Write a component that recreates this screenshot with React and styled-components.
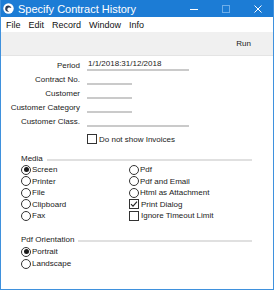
import React from "react";
import styled, { createGlobalStyle } from "styled-components";

const Global = createGlobalStyle`
	html, body {
		margin: 0;
		padding: 0;
		background: #ffffff;
	}
	body {
		font-family: "Liberation Sans", Arial, sans-serif;
		font-size: 8px;
		color: #1a1a1a;
	}
`;

const Window = styled.div`
	width: 274px;
	height: 290px;
	box-sizing: border-box;
	display: flex;
	flex-direction: column;
	border: 1px solid #3f91dd;
	border-top: none;
	background: #ffffff;
	overflow: hidden;
`;

const TitleBar = styled.div`
	height: 17px;
	margin: 0 -1px;
	display: flex;
	align-items: center;
	background: #1c7cd5;
	color: #ffffff;
	font-size: 11px;
	padding-left: 3px;
`;

const TitleText = styled.div`
	flex: 1;
	margin-left: 4px;
	white-space: nowrap;
`;

const WinButton = styled.div`
	width: 32px;
	height: 17px;
	display: flex;
	align-items: center;
	justify-content: center;
`;

const MenuBar = styled.div`
	height: 15px;
	display: flex;
	align-items: center;
	gap: 8px;
	padding-left: 5px;
	font-size: 9px;
	color: #111;
`;

const Toolbar = styled.div`
	height: 23px;
	display: flex;
	align-items: center;
	justify-content: flex-end;
	padding-right: 22px;
	background: #f0f0f0;
	border-bottom: 1px solid #e4e4e4;
	font-size: 8px;
`;

const Content = styled.div`
	padding-top: 2px;
`;

const Form = styled.div`
	display: grid;
	grid-template-columns: 79px auto;
	grid-auto-rows: 14px;
	column-gap: 7px;
	align-items: center;
`;

const Label = styled.div`
	text-align: right;
	white-space: nowrap;
`;

const Field = styled.div`
	width: ${({ w }) => w}px;
	height: 10px;
	line-height: 9px;
	border-bottom: 2px solid #cacaca;
	padding-left: 1px;
	white-space: nowrap;
`;

const CheckRow = styled.div`
	height: 14px;
	margin-top: 4px;
	padding-left: 86px;
	display: flex;
	align-items: center;
`;

const Box = styled.div`
	width: 10px;
	height: 10px;
	box-sizing: border-box;
	border: 1px solid #333;
	background: #fff;
	margin-right: 2px;
	display: flex;
	align-items: center;
	justify-content: center;
	flex-shrink: 0;
`;

const Group = styled.div`
	margin-top: ${({ top }) => top}px;
	padding: 0 21px 0 20px;
`;

const GroupHead = styled.div`
	height: 12px;
	display: flex;
	align-items: center;
`;

const GroupLine = styled.div`
	flex: 1;
	height: 2px;
	background: #e0e0e0;
	margin-left: 4px;
	margin-top: 3px;
`;

const Options = styled.div`
	display: grid;
	grid-template-columns: 108px auto;
	grid-auto-flow: column;
	grid-template-rows: repeat(${({ rows }) => rows}, ${({ step }) => step}px);
	align-items: center;
`;

const Option = styled.div`
	display: flex;
	align-items: center;
	white-space: nowrap;
`;

const Circle = styled.div`
	width: 10px;
	height: 10px;
	box-sizing: border-box;
	border: 1px solid #333;
	border-radius: 50%;
	background: #fff;
	margin-right: 1px;
	display: flex;
	align-items: center;
	justify-content: center;
	flex-shrink: 0;
	&::after {
		content: "";
		display: ${({ on }) => (on ? "block" : "none")};
		width: 5px;
		height: 5px;
		border-radius: 50%;
		background: #1a1a1a;
	}
`;

const Check = () => (
	<svg width="8" height="8" viewBox="0 0 8 8">
		<path d="M1 4.2 L3 6.2 L7 1.6" fill="none" stroke="#222" strokeWidth="1.1" />
	</svg>
);

const Radio = ({ on, children }) => (
	<Option>
		<Circle on={on ? 1 : 0} />
		{children}
	</Option>
);

const CheckOption = ({ on, children }) => (
	<Option>
		<Box>{on && <Check />}</Box>
		{children}
	</Option>
);

const AppIcon = () => (
	<svg width="11" height="11" viewBox="0 0 11 11">
		<circle cx="5.5" cy="5.5" r="5.2" fill="#ffffff" />
		<path d="M3 3.2 C5 1.8 8 2.6 8.4 5 C7 4 5 4.2 4.4 5.8 C4 7 5 8.4 6.4 8.6 C4 9.4 1.8 7.6 2.2 5.2 C2.4 4.3 2.7 3.6 3 3.2 Z" fill="#2a3a55" />
	</svg>
);

const App = () => {
	return (
		<>
			<Global />
			<Window>
				<TitleBar>
					<AppIcon />
					<TitleText>Specify Contract History</TitleText>
					<WinButton>
						<svg width="10" height="10" viewBox="0 0 10 10">
							<path d="M1 5.5 H9" stroke="#fff" strokeWidth="1" />
						</svg>
					</WinButton>
					<WinButton>
						<svg width="10" height="10" viewBox="0 0 10 10">
							<rect x="1.5" y="1.5" width="7" height="7" fill="none" stroke="#6eaee9" strokeWidth="1" />
						</svg>
					</WinButton>
					<WinButton>
						<svg width="10" height="10" viewBox="0 0 10 10">
							<path d="M1.5 1.5 L8.5 8.5 M8.5 1.5 L1.5 8.5" stroke="#fff" strokeWidth="1" />
						</svg>
					</WinButton>
				</TitleBar>
				<MenuBar>
					<span>File</span>
					<span>Edit</span>
					<span>Record</span>
					<span>Window</span>
					<span>Info</span>
				</MenuBar>
				<Toolbar>Run</Toolbar>
				<Content>
					<Form>
						<Label>Period</Label>
						<Field w={101}>1/1/2018:31/12/2018</Field>
						<Label>Contract No.</Label>
						<Field w={44} />
						<Label>Customer</Label>
						<Field w={44} />
						<Label>Customer Category</Label>
						<Field w={44} />
						<Label>Customer Class.</Label>
						<Field w={101} />
					</Form>
					<CheckRow>
						<Box />
						Do not show Invoices
					</CheckRow>
					<Group top={6}>
						<GroupHead>
							Media
							<GroupLine />
						</GroupHead>
						<Options rows={5} step={11.5}>
							<Radio on>Screen</Radio>
							<Radio>Printer</Radio>
							<Radio>File</Radio>
							<Radio>Clipboard</Radio>
							<Radio>Fax</Radio>
							<Radio>Pdf</Radio>
							<Radio>Pdf and Email</Radio>
							<Radio>Html as Attachment</Radio>
							<CheckOption on>Print Dialog</CheckOption>
							<CheckOption>Ignore Timeout Limit</CheckOption>
						</Options>
					</Group>
					<Group top={12}>
						<GroupHead>
							Pdf Orientation
							<GroupLine />
						</GroupHead>
						<Options rows={2} step={12}>
							<Radio on>Portrait</Radio>
							<Radio>Landscape</Radio>
						</Options>
					</Group>
				</Content>
			</Window>
		</>
	);
};

export default App;
